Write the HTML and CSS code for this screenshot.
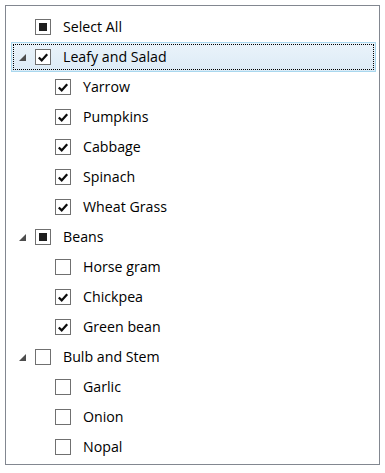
FILE: index.html
```html
<!DOCTYPE html>
<html lang="en">
<head>
  <meta charset="UTF-8">
  <title>Vegetables</title>
  <link rel="stylesheet" href="styles.css">
</head>
<body>
  <div class="tree">
    <!-- Select all -->
    <div class="row">
      <span class="expander"></span>
      <span class="check partial"></span>
      <span class="label">Select All</span>
    </div>

    <!-- Leafy and Salad -->
    <div class="row selected">
      <span class="expander"><svg width="7" height="7" viewBox="0 0 7 7"><polygon points="7,0 7,7 0,7" /></svg></span>
      <span class="check checked"><svg viewBox="0 0 16 16"><path d="M3.2 8 L6.5 11.3 L12.8 4.2" /></svg></span>
      <span class="label">Leafy and Salad</span>
    </div>
    <div class="row child">
      <span class="expander"></span>
      <span class="check checked"><svg viewBox="0 0 16 16"><path d="M3.2 8 L6.5 11.3 L12.8 4.2" /></svg></span>
      <span class="label">Yarrow</span>
    </div>
    <div class="row child">
      <span class="expander"></span>
      <span class="check checked"><svg viewBox="0 0 16 16"><path d="M3.2 8 L6.5 11.3 L12.8 4.2" /></svg></span>
      <span class="label">Pumpkins</span>
    </div>
    <div class="row child">
      <span class="expander"></span>
      <span class="check checked"><svg viewBox="0 0 16 16"><path d="M3.2 8 L6.5 11.3 L12.8 4.2" /></svg></span>
      <span class="label">Cabbage</span>
    </div>
    <div class="row child">
      <span class="expander"></span>
      <span class="check checked"><svg viewBox="0 0 16 16"><path d="M3.2 8 L6.5 11.3 L12.8 4.2" /></svg></span>
      <span class="label">Spinach</span>
    </div>
    <div class="row child">
      <span class="expander"></span>
      <span class="check checked"><svg viewBox="0 0 16 16"><path d="M3.2 8 L6.5 11.3 L12.8 4.2" /></svg></span>
      <span class="label">Wheat Grass</span>
    </div>

    <!-- Beans -->
    <div class="row">
      <span class="expander"><svg width="7" height="7" viewBox="0 0 7 7"><polygon points="7,0 7,7 0,7" /></svg></span>
      <span class="check partial"></span>
      <span class="label">Beans</span>
    </div>
    <div class="row child">
      <span class="expander"></span>
      <span class="check"></span>
      <span class="label">Horse gram</span>
    </div>
    <div class="row child">
      <span class="expander"></span>
      <span class="check checked"><svg viewBox="0 0 16 16"><path d="M3.2 8 L6.5 11.3 L12.8 4.2" /></svg></span>
      <span class="label">Chickpea</span>
    </div>
    <div class="row child">
      <span class="expander"></span>
      <span class="check checked"><svg viewBox="0 0 16 16"><path d="M3.2 8 L6.5 11.3 L12.8 4.2" /></svg></span>
      <span class="label">Green bean</span>
    </div>

    <!-- Bulb and Stem -->
    <div class="row">
      <span class="expander"><svg width="7" height="7" viewBox="0 0 7 7"><polygon points="7,0 7,7 0,7" /></svg></span>
      <span class="check"></span>
      <span class="label">Bulb and Stem</span>
    </div>
    <div class="row child">
      <span class="expander"></span>
      <span class="check"></span>
      <span class="label">Garlic</span>
    </div>
    <div class="row child">
      <span class="expander"></span>
      <span class="check"></span>
      <span class="label">Onion</span>
    </div>
    <div class="row child">
      <span class="expander"></span>
      <span class="check"></span>
      <span class="label">Nopal</span>
    </div>
  </div>
</body>
</html>
```

FILE: styles.css
```css
/* Reset */
* {
  margin: 0;
  padding: 0;
  box-sizing: border-box;
}

body {
  background: #ffffff;
  font-family: "Open Sans", "Noto Sans", sans-serif;
  font-size: 14.2px;
  color: #000000;
  padding: 5px 0 0 5px;
}

/* Tree container */
.tree {
  width: 375px;
  height: 460px;
  border: 1px solid #828790;
  padding: 6px 3px 0 5px;
}

/* Rows */
.row {
  display: flex;
  align-items: center;
  height: 30px;
  border: 1px solid transparent;
  position: relative;
}

.row.child {
  padding-left: 20px;
}

.row.selected {
  background: linear-gradient(#eaf3fa, #dcebf6);
  border-color: #a9d8ef;
}

/* dotted focus rectangle */
.row.selected::after {
  content: "";
  position: absolute;
  inset: 1px;
  border: 1px dotted #000000;
  pointer-events: none;
}

.expander {
  width: 23px;
  height: 16px;
  display: flex;
  align-items: center;
  padding-left: 7px;
  flex-shrink: 0;
}

.expander svg {
  fill: #4d4d4d;
  margin-top: 1px;
}

/* Checkbox */
.check {
  width: 16px;
  height: 16px;
  border: 1px solid #707070;
  background: #ffffff;
  display: flex;
  align-items: center;
  justify-content: center;
  flex-shrink: 0;
}

.check svg {
  width: 15px;
  height: 15px;
  fill: none;
  stroke: #0c0c0c;
  stroke-width: 2.6;
}

.check.partial::before {
  content: "";
  width: 8px;
  height: 8px;
  background: #1e1e1e;
}

.label {
  margin-left: 12px;
  white-space: nowrap;
  line-height: 1;
}
```
